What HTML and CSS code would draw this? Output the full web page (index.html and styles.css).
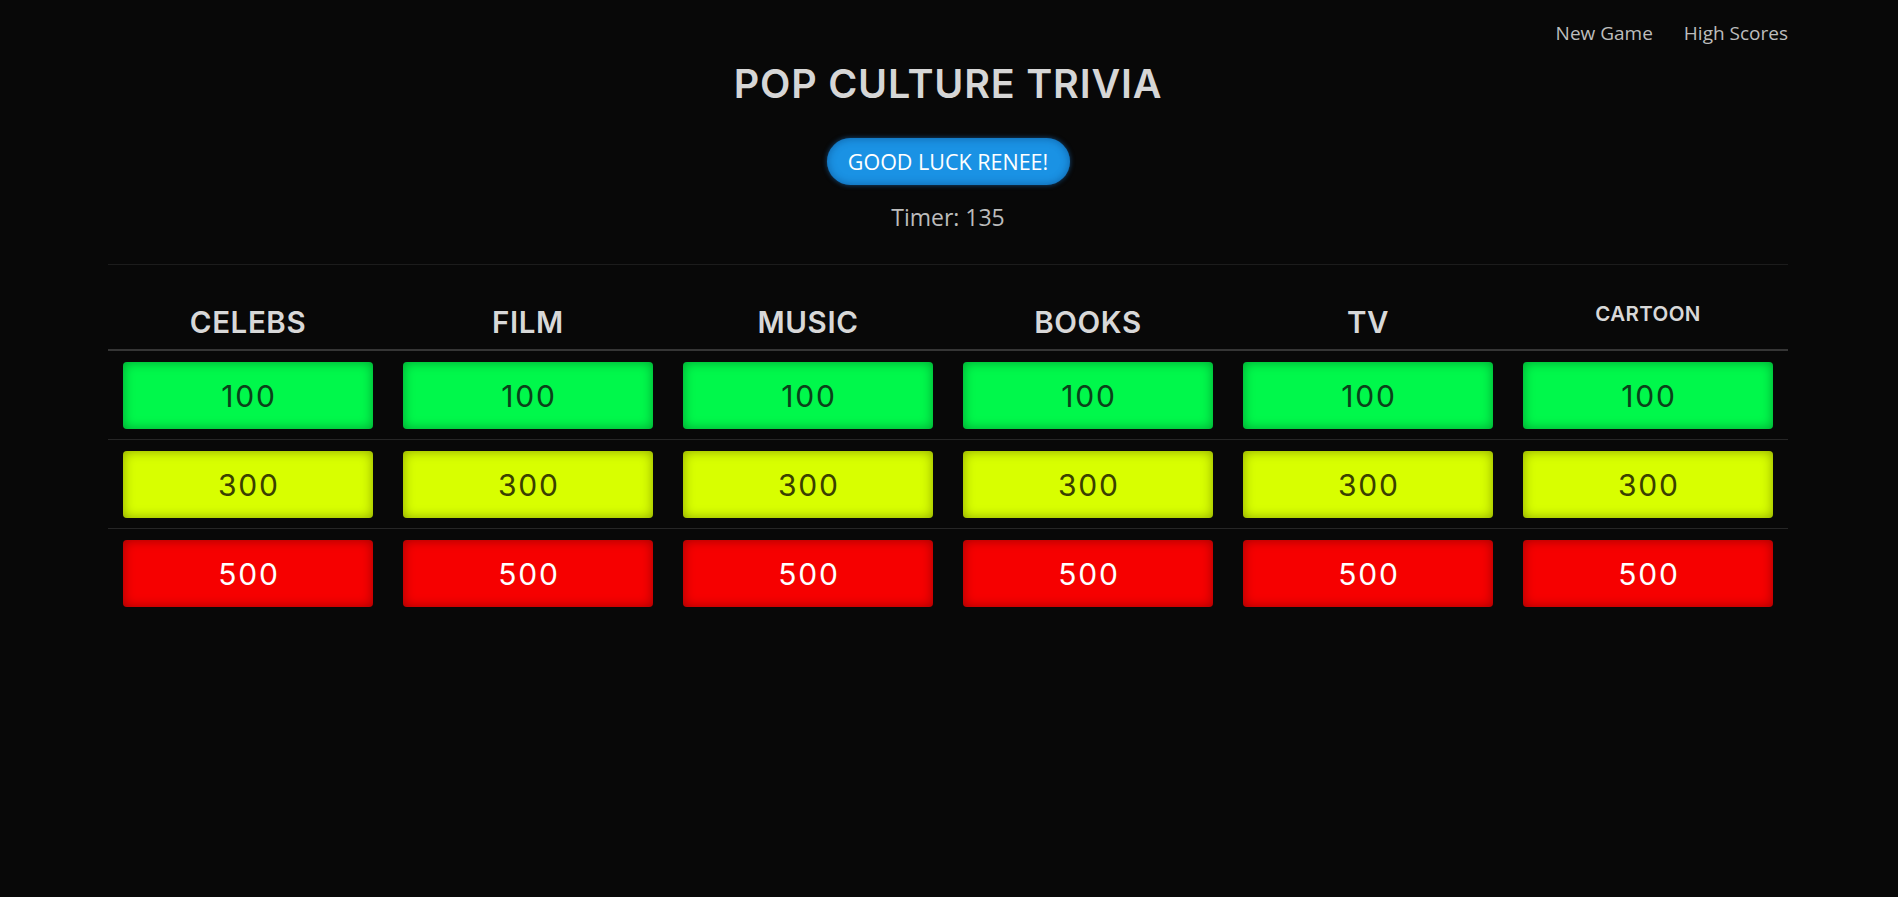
FILE: index.html
```html
<!DOCTYPE html>
<html lang="en">
<head>
<meta charset="utf-8">
<title>Pop Culture Trivia</title>
<link rel="stylesheet" href="styles.css">
</head>
<body>
<div class="container">
  <nav class="nav">
    <a class="nav-link" href="#">New Game</a>
    <a class="nav-link" href="#">High Scores</a>
  </nav>
  <header class="hero">
    <h1 class="title">POP CULTURE TRIVIA</h1>
    <div class="greeting">GOOD LUCK RENEE!</div>
    <p class="timer">Timer: 135</p>
  </header>
  <hr class="divider">
  <section class="board">
    <div class="board-head">
      <div class="cat">CELEBS</div>
      <div class="cat">FILM</div>
      <div class="cat">MUSIC</div>
      <div class="cat">BOOKS</div>
      <div class="cat">TV</div>
      <div class="cat cat-small">CARTOON</div>
    </div>
    <div class="board-row">
      <div class="cell"><button class="q q-100">100</button></div>
      <div class="cell"><button class="q q-100">100</button></div>
      <div class="cell"><button class="q q-100">100</button></div>
      <div class="cell"><button class="q q-100">100</button></div>
      <div class="cell"><button class="q q-100">100</button></div>
      <div class="cell"><button class="q q-100">100</button></div>
    </div>
    <div class="board-row">
      <div class="cell"><button class="q q-300">300</button></div>
      <div class="cell"><button class="q q-300">300</button></div>
      <div class="cell"><button class="q q-300">300</button></div>
      <div class="cell"><button class="q q-300">300</button></div>
      <div class="cell"><button class="q q-300">300</button></div>
      <div class="cell"><button class="q q-300">300</button></div>
    </div>
    <div class="board-row last">
      <div class="cell"><button class="q q-500">500</button></div>
      <div class="cell"><button class="q q-500">500</button></div>
      <div class="cell"><button class="q q-500">500</button></div>
      <div class="cell"><button class="q q-500">500</button></div>
      <div class="cell"><button class="q q-500">500</button></div>
      <div class="cell"><button class="q q-500">500</button></div>
    </div>
  </section>
</div>
</body>
</html>
```

FILE: styles.css
```css
html, body {
  margin: 0;
  padding: 0;
  background: #080808;
  color: #c8c8c8;
  font-family: "Open Sans", "Noto Sans", sans-serif;
}

body {
  padding-right: 2px;
}

.container {
  width: 1680px;
  margin: 0 auto;
}

.nav {
  display: flex;
  justify-content: flex-end;
  gap: 31px;
  padding-top: 20px;
  height: 26px;
}

.nav-link {
  font-size: 19px;
  line-height: 26px;
  color: #bdbdbd;
  text-decoration: none;
}

.hero {
  display: flex;
  flex-direction: column;
  align-items: center;
}

.title {
  margin: 14px 0 0;
  font-family: "Inter", "Lato", sans-serif;
  font-weight: 600;
  font-size: 39.5px;
  line-height: 48px;
  color: #d6d6d6;
  letter-spacing: 0.8px;
}

.greeting {
  margin-top: 30px;
  width: 243px;
  height: 47px;
  box-sizing: border-box;
  border-radius: 24px;
  background: #1a92e4;
  box-shadow: inset 0 0 9px rgba(0, 40, 90, 0.45), 0 0 5px rgba(30, 130, 220, 0.55);
  color: #fff;
  font-size: 21.5px;
  line-height: 47px;
  text-align: center;
}

.timer {
  margin: 16px 0 0;
  font-size: 23px;
  line-height: 32px;
  color: #bcbcbc;
}

.divider {
  margin: 31px 0 0;
  border: 0;
  border-top: 1px solid #1c1c1c;
  height: 0;
}

.board-head,
.board-row {
  display: grid;
  grid-template-columns: repeat(6, 1fr);
}

.board-head {
  height: 84px;
  border-bottom: 2px solid #353535;
  align-items: end;
}

.cat {
  text-align: center;
  font-family: "Inter", "Lato", sans-serif;
  font-weight: 600;
  font-size: 29.5px;
  line-height: 36px;
  color: #d8d8d8;
  padding-bottom: 9px;
  letter-spacing: 0.6px;
}

.cat-small {
  font-size: 20.5px;
  line-height: 28px;
  padding-bottom: 21px;
  letter-spacing: 0.4px;
}

.board-row {
  border-bottom: 1px solid #262626;
}

.board-row.last {
  border-bottom: 0;
}

.cell {
  padding: 11px 15px 10px;
}

.q {
  display: block;
  width: 100%;
  height: 67px;
  border: 0;
  border-radius: 4px;
  font-family: "Inter", "Lato", sans-serif;
  font-size: 30px;
  font-weight: 400;
  letter-spacing: 1.8px;
  padding: 0 0 0 1.8px;
  cursor: pointer;
  box-shadow: inset 0 0 12px rgba(0, 0, 0, 0.36);
}

.q-100 {
  background: #00f84b;
  color: #0b4119;
}

.q-300 {
  background: #d8ff00;
  color: #3a4000;
}

.q-500 {
  background: #f60000;
  color: #ffffff;
}
```
